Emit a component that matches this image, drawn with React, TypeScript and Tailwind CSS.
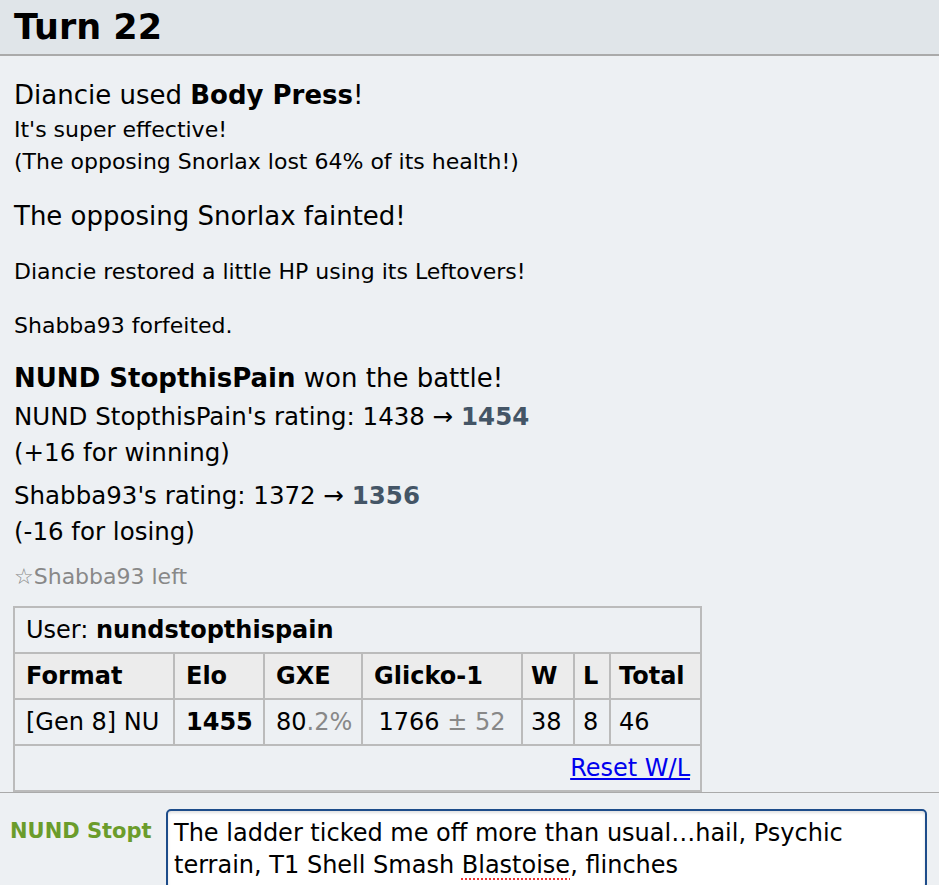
import React from 'react';

const font = { fontFamily: '"DejaVu Sans", Verdana, sans-serif' };

function Big({ children, className = '' }: { children: React.ReactNode; className?: string }) {
  return <div className={`text-[26px] leading-[38px] ${className}`}>{children}</div>;
}

function Small({ children, className = '' }: { children: React.ReactNode; className?: string }) {
  return <div className={`text-[22px] leading-[32px] ${className}`}>{children}</div>;
}

function Rating({ children, className = '' }: { children: React.ReactNode; className?: string }) {
  return <div className={`text-[24.5px] leading-[36px] ${className}`}>{children}</div>;
}

export default function App() {
  return (
    <div className="w-[939px] h-[885px] overflow-hidden bg-[#edf0f3] text-black" style={font}>
      {/* turn header */}
      <div className="h-[56px] bg-[#e0e5e9] border-b-2 border-[#aaaaaa] px-[14px] flex items-center">
        <h2 className="text-[35px] font-bold leading-none">Turn 22</h2>
      </div>

      {/* battle log */}
      <div className="px-[14px]">
        <div className="pt-[20px]">
          <Big>
            Diancie used <strong>Body Press</strong>!
          </Big>
          <Small>It's super effective!</Small>
          <Small>(The opposing Snorlax lost 64% of its health!)</Small>
        </div>
        <Big className="mt-[19px]">The opposing Snorlax fainted!</Big>
        <Small className="mt-[21px]">Diancie restored a little HP using its Leftovers!</Small>
        <Small className="mt-[22px]">Shabba93 forfeited.</Small>
        <Big className="mt-[17px]">
          <strong>NUND StopthisPain</strong> won the battle!
        </Big>
        <Rating className="mt-[2px]">
          NUND StopthisPain's rating: 1438 → <strong className="text-[#445566]">1454</strong>
        </Rating>
        <Rating>(+16 for winning)</Rating>
        <Rating className="mt-[7px]">
          Shabba93's rating: 1372 → <strong className="text-[#445566]">1356</strong>
        </Rating>
        <Rating>(-16 for losing)</Rating>
        <Small className="mt-[11px] text-[#888888]">☆Shabba93 left</Small>

        {/* ladder table */}
        <table className="mt-[13px] -ml-[1px] border-collapse border-2 border-[#bbbbbb] text-[24px] table-fixed w-[687px]">
          <colgroup>
            <col className="w-[160px]" />
            <col className="w-[90px]" />
            <col className="w-[98px]" />
            <col className="w-[160px]" />
            <col className="w-[52px]" />
            <col className="w-[36px]" />
            <col className="w-[91px]" />
          </colgroup>
          <tbody>
            <tr className="h-[46px]">
              <td colSpan={7} className="border-2 border-[#bbbbbb] px-[11px]">
                User: <strong>nundstopthispain</strong>
              </td>
            </tr>
            <tr className="h-[46px] bg-[#ececec] font-bold">
              <th className="border-2 border-[#bbbbbb] px-[11px] text-left">Format</th>
              <th className="border-2 border-[#bbbbbb] px-[11px] text-left">Elo</th>
              <th className="border-2 border-[#bbbbbb] px-[11px] text-left">GXE</th>
              <th className="border-2 border-[#bbbbbb] px-[11px] text-left">Glicko-1</th>
              <th className="border-2 border-[#bbbbbb] px-[8px] text-left">W</th>
              <th className="border-2 border-[#bbbbbb] px-[8px] text-left">L</th>
              <th className="border-2 border-[#bbbbbb] px-[8px] text-left">Total</th>
            </tr>
            <tr className="h-[46px]">
              <td className="border-2 border-[#bbbbbb] px-[11px] whitespace-nowrap">[Gen 8] NU</td>
              <td className="border-2 border-[#bbbbbb] px-[11px] font-bold">1455</td>
              <td className="border-2 border-[#bbbbbb] px-[11px] whitespace-nowrap">
                80<span className="text-[#888888]">.2%</span>
              </td>
              <td className="border-2 border-[#bbbbbb] px-[4px] text-center whitespace-nowrap">
                1766 <span className="text-[#888888]">± 52</span>
              </td>
              <td className="border-2 border-[#bbbbbb] px-[8px]">38</td>
              <td className="border-2 border-[#bbbbbb] px-[8px]">8</td>
              <td className="border-2 border-[#bbbbbb] px-[8px]">46</td>
            </tr>
            <tr className="h-[46px]">
              <td colSpan={7} className="border-2 border-[#bbbbbb] px-[10px] text-right align-bottom pb-[4px]">
                <a href="#" className="text-[#0000ee] underline">
                  Reset W/L
                </a>
              </td>
            </tr>
          </tbody>
        </table>
      </div>

      {/* chat input */}
      <div className="border-t border-[#aaaaaa] pt-[16px] flex items-start">
        <div className="w-[158px] pl-[10px] pt-[8px] overflow-hidden whitespace-nowrap text-[21px] font-bold text-[#6b9c2b] leading-[28px]">
          NUND Stopt
        </div>
        <div className="ml-[8px] w-[761px] h-[80px] bg-white border-2 border-[#1d4c8a] rounded-[5px] shadow-[inset_0_2px_3px_rgba(0,0,0,0.12)] px-[6px] pt-[6px] text-[24px] leading-[32px] whitespace-nowrap">
          The ladder ticked me off more than usual…hail, Psychic
          <br />
          terrain, T1 Shell Smash{' '}
          <span className="underline decoration-dotted decoration-[#e33] decoration-2 underline-offset-[5px]">Blastoise</span>, flinches
        </div>
      </div>
    </div>
  );
}
